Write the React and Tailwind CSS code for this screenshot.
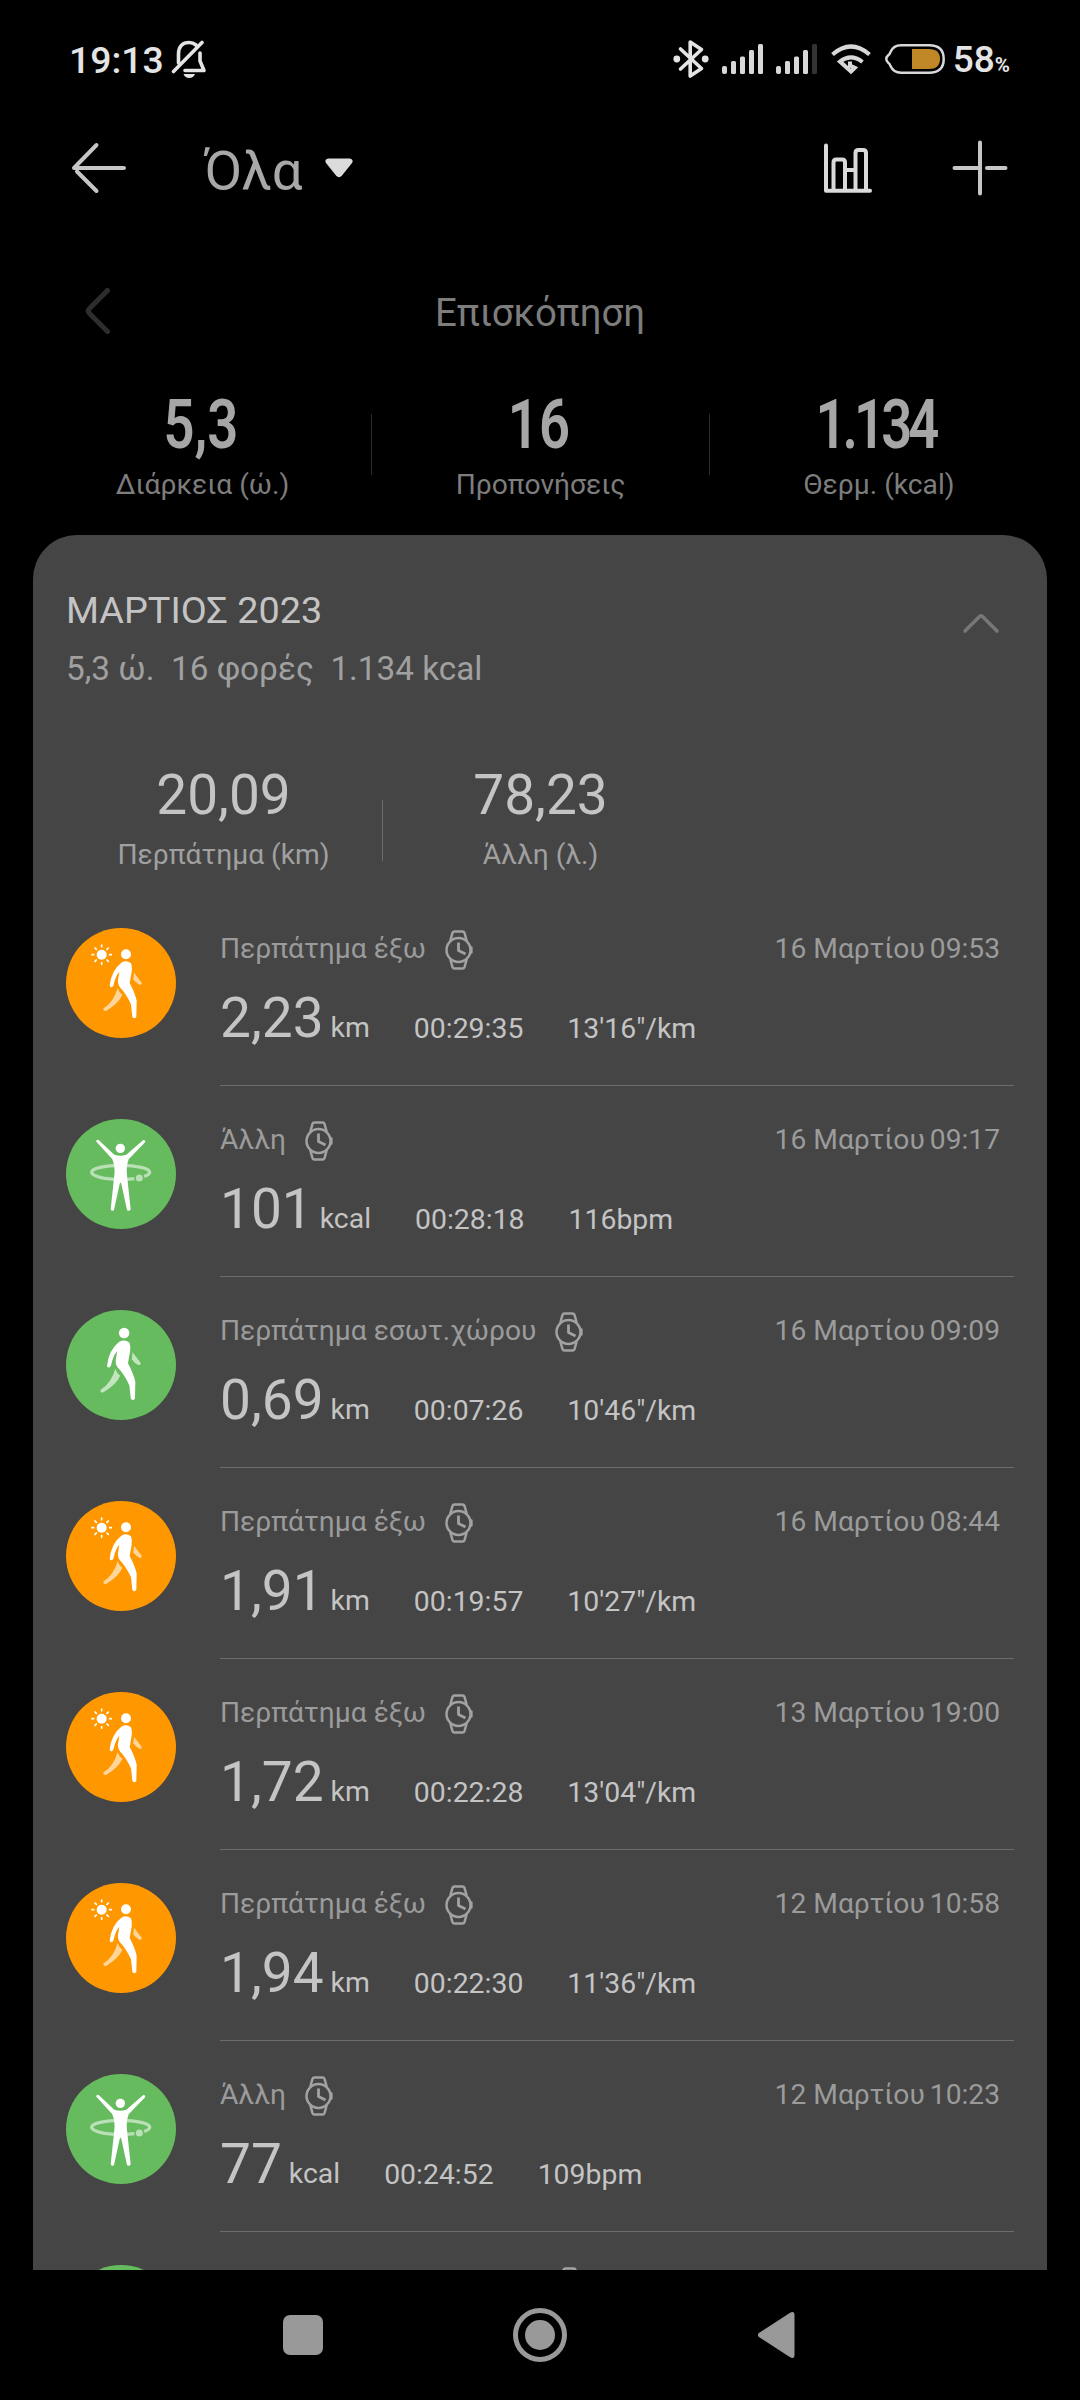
const activities = [
    { type: "outdoor", title: "Περπάτημα έξω", day: "16 Μαρτίου", hour: "09:53", value: "2,23", unit: "km", time: "00:29:35", extra: "13'16\"/km" },
    { type: "other", title: "Άλλη", day: "16 Μαρτίου", hour: "09:17", value: "101", unit: "kcal", time: "00:28:18", extra: "116bpm" },
    { type: "indoor", title: "Περπάτημα εσωτ.χώρου", day: "16 Μαρτίου", hour: "09:09", value: "0,69", unit: "km", time: "00:07:26", extra: "10'46\"/km" },
    { type: "outdoor", title: "Περπάτημα έξω", day: "16 Μαρτίου", hour: "08:44", value: "1,91", unit: "km", time: "00:19:57", extra: "10'27\"/km" },
    { type: "outdoor", title: "Περπάτημα έξω", day: "13 Μαρτίου", hour: "19:00", value: "1,72", unit: "km", time: "00:22:28", extra: "13'04\"/km" },
    { type: "outdoor", title: "Περπάτημα έξω", day: "12 Μαρτίου", hour: "10:58", value: "1,94", unit: "km", time: "00:22:30", extra: "11'36\"/km" },
    { type: "other", title: "Άλλη", day: "12 Μαρτίου", hour: "10:23", value: "77", unit: "kcal", time: "00:24:52", extra: "109bpm" },
];

const totals = [
    { value: "5,3", label: "Διάρκεια (ώ.)", spacing: "pr-1" },
    { value: "16", label: "Προπονήσεις", spacing: "pr-1" },
    { value: "1.134", label: "Θερμ. (kcal)", spacing: "pr-[9px] tracking-[-5px]" },
];

function Walker() {
    return (
        <g fill="#fff">
            <circle cx="228" cy="163" r="15" />
            <path d="M214 188Q229 179 243 190Q247 201 245 215L239 249Q255 279 260 302L259 350Q253 359 247 350L243 313Q228 280 209 261Q201 248 205 234L208 215Q197 226 190 257Q183 266 179 257Q184 211 214 188Z" />
            <path opacity="0.6" d="M203 264Q207 278 217 284Q207 309 168 333Q158 334 161 325Q192 305 203 264Z" />
            <path opacity="0.6" d="M252 218L275 248Q277 256 268 254Q257 249 250 238Z" />
        </g>
    );
}

function ActivityIcon({ type }) {
    if (type === "other") {
        return (
            <svg viewBox="48 57 330 330" className="size-[110px] shrink-0">
                <circle cx="213" cy="222" r="165" fill="#66bb5e" />
                <ellipse cx="212" cy="217" rx="87" ry="21" fill="none" stroke="#b9e0b6" strokeWidth="10" />
                <circle cx="268" cy="234" r="13" fill="#b9e0b6" stroke="#66bb5e" strokeWidth="5" />
                <circle cx="211" cy="145" r="14" fill="#fff" />
                <path
                    fill="#fff"
                    d="M138 124Q140 118 146 120L193 164Q211 170 229 164L280 120Q286 119 286 126L236 178Q228 200 231 225L242 328Q238 336 231 330L214 252Q212 244 209 252L192 330Q186 336 182 328L193 225Q196 200 187 178Z"
                />
            </svg>
        );
    }

    return (
        <svg viewBox="48 84 330 330" className="size-[110px] shrink-0">
            <circle cx="213" cy="249" r="165" fill={type === "outdoor" ? "#ff9800" : "#66bb5e"} />
            {type === "outdoor" ? (
                <>
                    <circle cx="155" cy="164" r="15" fill="#fff" />
                    <path
                        stroke="#fff"
                        strokeWidth="5"
                        strokeLinecap="round"
                        d="M155 135v5M155 188v5M126 164h5M179 164h5M135 144l4 4M171 180l4 4M135 184l4-4M171 148l4-4"
                    />
                    <Walker />
                </>
            ) : (
                <g transform="translate(-17 -18) scale(1.05)">
                    <Walker />
                </g>
            )}
        </svg>
    );
}

function WatchIcon() {
    return (
        <svg viewBox="0 0 28 40" className="h-10 w-7 shrink-0" fill="none" stroke="#a2a2a2" strokeWidth="2.500" strokeLinecap="round" strokeLinejoin="round">
            <circle cx="13.500" cy="20" r="12" />
            <path d="M5.500 10L7.500 2.800Q8 1.400 9.500 1.400H17.500Q19 1.400 19.500 2.800L21.500 10M5.500 30L7.500 37.200Q8 38.600 9.500 38.600H17.500Q19 38.600 19.500 37.200L21.500 30M26.400 17.500v5" />
            <path strokeWidth="2.800" strokeLinecap="butt" d="M13.500 12.500V20.500L20.500 24" />
        </svg>
    );
}

function ActivityRow({ item }) {
    return (
        <div className="flex h-[191px] shrink-0 pl-[33px] pr-[33px]">
            <div className="pt-[33px]">
                <ActivityIcon type={item.type} />
            </div>
            <div className="ml-11 flex-1 border-b border-[#6c6c6c] pt-[35px]">
                <div className="flex h-10 items-start text-[28.2px] leading-[38px] text-[#9b9b9b]">
                    <span>{item.title}</span>
                    <span className="ml-[19px]">
                        <WatchIcon />
                    </span>
                    <span className="ml-auto">{item.day}</span>
                    <span className="ml-[5px] mr-[14px]">{item.hour}</span>
                </div>
                <div className="mt-4 flex items-baseline text-[28.4px] leading-[64px] text-[#c4c4c4]">
                    <span className="text-[55px]">{item.value}</span>
                    <span className="ml-[7px]">{item.unit}</span>
                    <span className="relative top-px ml-11">{item.time}</span>
                    <span className="relative top-px ml-[44px]">{item.extra}</span>
                </div>
            </div>
        </div>
    );
}

function SignalIcon({ weak }) {
    return (
        <svg viewBox="0 0 42 30" className="h-[30px] w-[42px]" fill="#d8d8d8">
            <rect x="0" y="22" width="5" height="8" rx="2" />
            <rect x="9" y="17" width="5" height="13" rx="1.5" />
            <rect x="18" y="12.500" width="5" height="17.500" rx="1.5" />
            <rect x="27" y="6" width="5" height="24" rx="1.5" />
            <rect x="36" y="0" width="5" height="30" rx="1.5" fill={weak ? "#333" : "#d8d8d8"} />
        </svg>
    );
}

function StatusBar() {
    return (
        <div className="flex h-[118px] items-center pl-[69px] pr-[70px] font-medium text-[#e4e4e4]">
            <span className="pt-[2px] text-[37.300px] leading-[44px]">19:13</span>
            <svg viewBox="0 0 36 40" className="ml-[7px] h-10 w-9" fill="none" stroke="#e4e4e4" strokeWidth="3.600" strokeLinecap="round" strokeLinejoin="round">
                <path d="M7.500 24V15C7.500 7 12 3.500 18 3.500Q22 3.500 25 6" />
                <path d="M29 14V22L33 31.500H14" />
                <path d="M2.500 32.500L31 3.500" />
                <path d="M12.500 35H24Q22.500 39 18.200 39Q14 39 12.500 35Z" fill="#e4e4e4" stroke="none" />
            </svg>
            <div className="ml-auto flex items-center">
                <svg viewBox="0 0 36 40" className="h-10 w-9" fill="none" stroke="#e4e4e4" strokeWidth="3.600" strokeLinejoin="round" strokeLinecap="round">
                    <path d="M7.500 10L28.500 29.500L17.200 37V3L28.500 10.500L7.500 30" />
                    <path d="M3.800 16.800L6.800 20L3.800 23.200L.8 20ZM32.200 16.800L35.200 20L32.200 23.200L29.200 20Z" fill="#e4e4e4" stroke="none" />
                    <circle cx="3.800" cy="20" r="1.600" />
                    <circle cx="32.200" cy="20" r="1.600" />
                </svg>
                <span className="ml-[13px]"><SignalIcon /></span>
                <span className="ml-3"><SignalIcon weak /></span>
                <svg viewBox="0 0 40 30" className="ml-[13px] h-[30px] w-10" fill="none" stroke="#d8d8d8" strokeWidth="4.200">
                    <path d="M1.500 10.500Q20-5.500 38.500 10.500" />
                    <path d="M31.500 18Q20 9 9 17.500L20 27.500L23.800 23.800L19 21.500V17.500" strokeWidth="4" />
                </svg>
                <svg viewBox="0 0 60 30" className="ml-[14px] h-[30px] w-[60px]">
                    <path d="M16 1.300H44Q58.700 1.300 58.700 15T44 28.700H16Q8.500 28.700 5.500 22Q5 20 3 18.500Q1.300 17 1.300 15T3 11.500Q5 10 5.500 8Q8.500 1.300 16 1.300Z" fill="none" stroke="#d8d8d8" strokeWidth="2.500" />
                    <path d="M27 5H44Q55 5 55 15T44 25H27Z" fill="#bf8726" />
                </svg>
                <span className="ml-2 pt-[2px] text-[37px] leading-[44px]">58</span>
                <span className="pt-3 text-[20.500px] font-bold leading-none">%</span>
            </div>
        </div>
    );
}

function TopBar() {
    return (
        <div className="flex h-[100px] items-center pl-[71px] pr-[72px]">
            <svg viewBox="0 0 56 52" className="h-[52px] w-14" fill="none" stroke="#c6c6c6" strokeWidth="4" strokeLinecap="round" strokeLinejoin="round">
                <path d="M53 26H3L25.500 3M6 29.500L25.500 49" />
            </svg>
            <span className="ml-[77px] pt-1 text-[54.500px] leading-[64px] text-[#a8a8a8]">Όλα</span>
            <svg viewBox="0 0 28 20" className="ml-[23px] h-5 w-7" fill="#dcdcdc">
                <path d="M3 .5H25Q29 1.500 27 5L17 17.500Q14 21 11 17.500L1 5Q-1 1.500 3 .5Z" />
            </svg>
            <svg viewBox="0 0 50 52" className="ml-auto h-[52px] w-[50px]" fill="none" stroke="#dadada" strokeWidth="4" strokeLinecap="round" strokeLinejoin="round">
                <path d="M3 3.500V48.700H47M10.500 48V20.500Q10.500 17.500 13.500 17.500H19Q22 17.500 22 20.500V48M22 28H32.500M32.500 48V11Q32.500 8 35.500 8H40Q43 8 43 11V48" />
            </svg>
            <svg viewBox="0 0 56 56" className="ml-[79px] size-14" stroke="#c6c6c6" strokeWidth="4" strokeLinecap="round">
                <path d="M28 2.500V53.500M2.500 28H28M35 28H53.500" />
            </svg>
        </div>
    );
}

export default function App() {
    return (
        <div className="flex h-[2400px] w-[1080px] flex-col overflow-hidden bg-black font-['Roboto',sans-serif]">
            <StatusBar />
            <TopBar />

            <div className="flex flex-col">
                <div className="grid h-[100px] grid-cols-[1fr_auto_1fr] items-start px-[84px] pt-[68px]">
                    <svg viewBox="0 0 28 50" className="h-[50px] w-7" fill="none" stroke="#2d2d2d" strokeWidth="5" strokeLinecap="round" strokeLinejoin="round">
                        <path d="M23.500 4.500L5.500 22.500Q3 25 5.500 27.500L23.500 45.500" />
                    </svg>
                    <span className="mt-[3px] text-[38.400px] leading-[48px] text-[#7d7d7d]">Επισκόπηση</span>
                </div>
                <div className="ml-[34px] mr-8 mt-[67px] grid h-[150px] grid-cols-3 text-center">
                    {totals.map((total, i) => (
                        <div key={total.label} className="flex">
                            <div className="flex-1">
                                <div className={`origin-center scale-x-[0.8] text-[68px] font-semibold leading-[80px] text-[#a6a6a6] ${total.spacing}`}>{total.value}</div>
                                <div className="mt-px text-[28.200px] leading-[37px] text-[#7d7d7d]">{total.label}</div>
                            </div>
                            {i < 2 && <div className="mt-[29px] h-[61px] w-px bg-[#2c2c2c]" />}
                        </div>
                    ))}
                </div>
            </div>

            <div className="mx-[33px] flex h-[1735px] flex-col overflow-hidden rounded-t-[44px] bg-[#454545]">
                <div className="flex h-[228px] shrink-0 items-start justify-between pl-[33px] pr-[47px] pt-[51px]">
                    <div>
                        <div className="text-[37.800px] leading-[48px] text-[#c4c4c4]">ΜΑΡΤΙΟΣ 2023</div>
                        <div className="mt-[13px] whitespace-pre text-[33.300px] leading-[44px] text-[#a0a0a0]">{"5,3 ώ.  16 φορές  1.134 kcal"}</div>
                    </div>
                    <svg viewBox="0 0 38 22" className="mt-[26px] h-[22px] w-[38px]" fill="none" stroke="#777" strokeWidth="3.600" strokeLinecap="round" strokeLinejoin="round">
                        <path d="M3 19L17.500 4.500Q19 3 20.500 4.500L35 19" />
                    </svg>
                </div>

                <div className="flex h-[132px] shrink-0 pl-[33px] text-center">
                    <div className="w-[315px]">
                        <div className="text-[55px] leading-[64px] text-[#c4c4c4]">20,09</div>
                        <div className="mt-[9px] text-[28.200px] leading-[38px] text-[#a0a0a0]">Περπάτημα (km)</div>
                    </div>
                    <div className="ml-px mt-[37px] h-[61px] w-px bg-[#6c6c6c]" />
                    <div className="w-[315px]">
                        <div className="text-[55px] leading-[64px] text-[#c4c4c4]">78,23</div>
                        <div className="mt-[9px] text-[28.200px] leading-[38px] text-[#a0a0a0]">Άλλη (λ.)</div>
                    </div>
                </div>

                {activities.map((item, i) => (
                    <ActivityRow key={i} item={item} />
                ))}

                {/* next row, mostly scrolled out of view */}
                <div className="flex pl-[33px] pt-[33px]">
                    <ActivityIcon type="indoor" />
                    <div className="ml-[380px] mt-[2px]">
                        <WatchIcon />
                    </div>
                </div>
            </div>

            <div className="flex h-[130px] items-center pl-[283px]">
                <div className="size-10 rounded-[7px] bg-[#999]" />
                <div className="ml-[190px] flex size-[54px] items-center justify-center rounded-full border-[5px] border-[#999]">
                    <div className="size-[30px] rounded-full bg-[#999]" />
                </div>
                <svg viewBox="0 0 38 46" className="ml-[190px] h-[46px] w-[38px]" fill="#999">
                    <path d="M33.500 .5Q37.500-1 37.500 3V43Q37.500 47 33.500 45.500L1.800 25Q0 23 1.800 21Z" />
                </svg>
            </div>
        </div>
    );
}
